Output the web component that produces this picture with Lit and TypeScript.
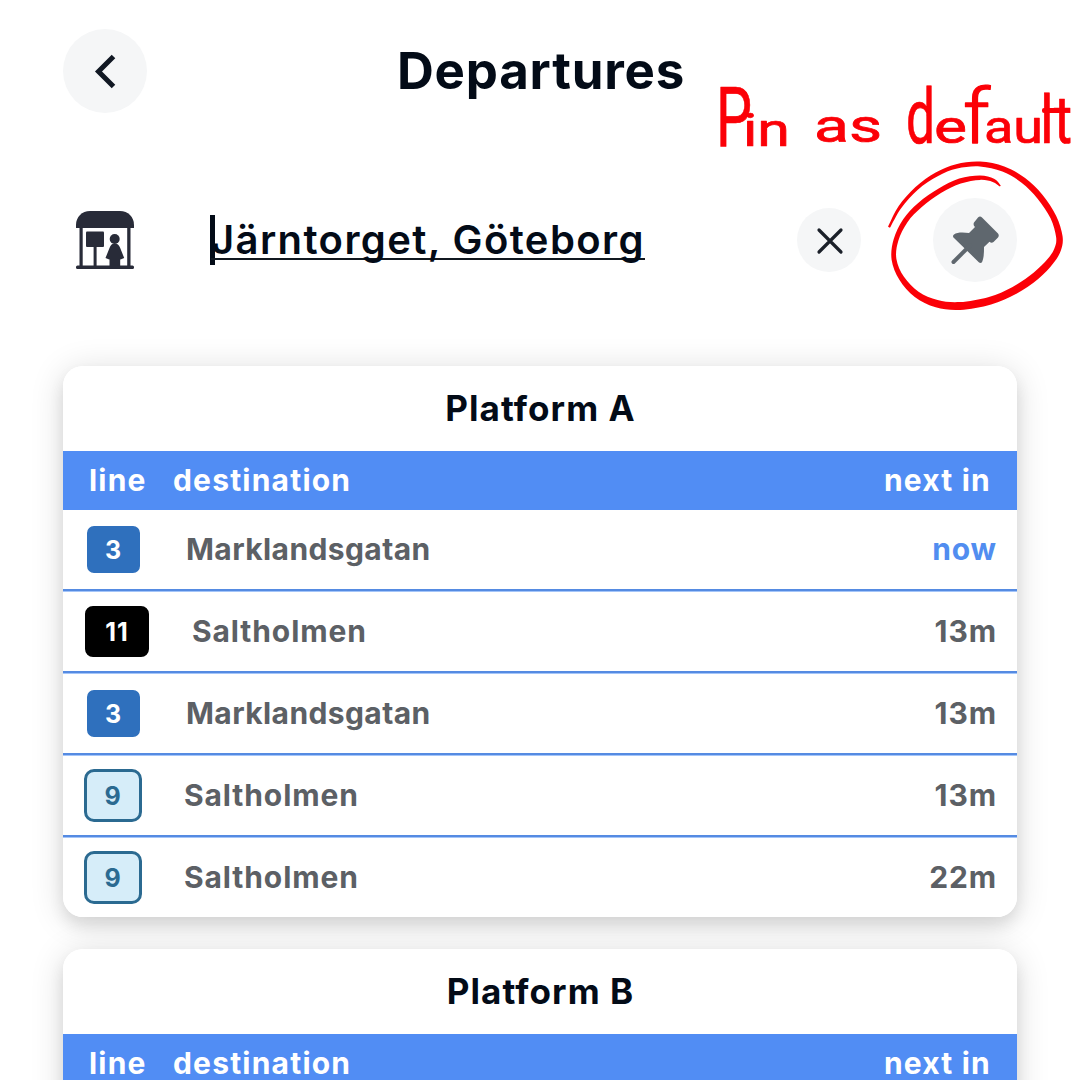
import { LitElement, html, css, svg } from "lit";
import { customElement, property } from "lit/decorators.js";
import { classMap } from "lit/directives/class-map.js";

type Tone = "blue" | "black" | "sky";

interface Departure {
  line: string;
  tone: Tone;
  destination: string;
  next: string;
}

const PLATFORM_A: Departure[] = [
  { line: "3", tone: "blue", destination: "Marklandsgatan", next: "now" },
  { line: "11", tone: "black", destination: "Saltholmen", next: "13m" },
  { line: "3", tone: "blue", destination: "Marklandsgatan", next: "13m" },
  { line: "9", tone: "sky", destination: "Saltholmen", next: "13m" },
  { line: "9", tone: "sky", destination: "Saltholmen", next: "22m" },
];

/* Centre line of the marker stroke: x, y and the stroke's width there. */
const MARKER: [number, number, number][] = [
  [567, 502, 5], [600, 441, 8], [650, 385, 9], [710, 343, 11], [770, 319, 12],
  [840, 312, 13], [910, 327, 15], [970, 361, 16], [1020, 410, 17], [1060, 471, 17],
  [1078, 530, 18], [1073, 568, 19], [1051, 604, 20], [1008, 647, 22], [942, 692, 22],
  [870, 722, 22], [780, 738, 22], [710, 731, 21], [650, 703, 18], [605, 655, 15],
  [582, 598, 13], [588, 540, 13], [616, 482, 14], [660, 435, 15], [720, 392, 14],
  [780, 363, 14], [840, 353, 12], [880, 361, 9], [901, 378, 3],
];

function curve(points: number[][]): string {
  const n = points.length;
  let d = "";
  for (let i = 0; i < n - 1; i++) {
    const p0 = points[Math.max(i - 1, 0)];
    const p1 = points[i];
    const p2 = points[i + 1];
    const p3 = points[Math.min(i + 2, n - 1)];
    const c = [
      p1[0] + (p2[0] - p0[0]) / 6, p1[1] + (p2[1] - p0[1]) / 6,
      p2[0] - (p3[0] - p1[0]) / 6, p2[1] - (p3[1] - p1[1]) / 6,
      p2[0], p2[1],
    ];
    d += "C" + c.map((v) => v.toFixed(1)).join(" ");
  }
  return d;
}

function marker(points: [number, number, number][]): string {
  const edge = (side: number) =>
    points.map(([x, y, w], i) => {
      const a = points[Math.max(i - 1, 0)];
      const b = points[Math.min(i + 1, points.length - 1)];
      const dx = b[0] - a[0];
      const dy = b[1] - a[1];
      const k = (side * (w + 1.5)) / 2 / Math.hypot(dx, dy);
      return [x - dy * k, y + dx * k];
    });
  const left = edge(1);
  const right = edge(-1).reverse();
  return `M${left[0].join(" ")}${curve(left)}L${right[0].join(" ")}${curve(right)}Z`;
}

@customElement("line-badge")
export class LineBadge extends LitElement {
  @property() tone: Tone = "blue";
  @property() line = "";

  static styles = css`
    :host { display: block; }
    .badge {
      box-sizing: border-box;
      display: flex;
      align-items: center;
      justify-content: center;
      width: 58px;
      height: 53px;
      padding-top: 2px;
      border: 3px solid #fff;
      border-radius: 10px;
      font: 700 25px/1 Inter, "Liberation Sans", sans-serif;
      color: #fff;
    }
    .blue { width: 59px; margin-right: -1px; background: #2f70bd; }
    .black { width: 64px; height: 51px; margin: 1px; background: #000; border-color: #000; border-radius: 8px; }
    .sky { background: #d6edf9; border-color: #2b6a91; color: #2b6a91; }
  `;

  render() {
    return html`<div class=${classMap({ badge: true, [this.tone]: true })}>${this.line}</div>`;
  }
}

@customElement("platform-card")
export class PlatformCard extends LitElement {
  @property() heading = "";
  @property({ attribute: false }) departures: Departure[] = [];

  static styles = css`
    :host { display: block; }
    .card {
      overflow: hidden;
      border-radius: 20px;
      background: #fff;
    }
    .shadow {
      border-radius: 20px;
      box-shadow: 0 9px 15px rgba(0, 0, 0, 0.09), 0 4px 34px rgba(0, 0, 0, 0.14);
    }
    .title {
      margin: 0 -1px 0 0;
      height: 85px;
      text-align: center;
      font-size: 35px;
      font-weight: 650;
      line-height: 84px;
      color: #030b17;
      letter-spacing: 1.1px;
    }
    .head {
      box-sizing: border-box;
      display: flex;
      align-items: center;
      height: 59px;
      padding: 0 26px 2px;
      background: #518df4;
      color: #fff;
      font-size: 30px;
      font-weight: 700;
      letter-spacing: 1.2px;
    }
    .line { width: 84px; }
    .dest { flex: 1; }
    .row {
      box-sizing: border-box;
      display: flex;
      align-items: center;
      height: 79px;
      padding: 0 20px 0 21px;
      color: #5c6065;
      font-size: 30px;
      font-weight: 650;
      letter-spacing: 0.9px;
    }
    .row span { padding-bottom: 2px; }
    .rule { height: 3px; background: linear-gradient(#558be2 0 2px, #a4c5f9 2px); }
    .name { flex: 1; margin-left: 42px; }
    .name.blue { margin-left: 44px; letter-spacing: 0.4px; }
    .now { color: #518df0; }
  `;

  render() {
    return html`
      <div class="shadow">
        <section class="card">
          <h2 class="title">${this.heading}</h2>
          <div class="head">
            <span class="line">line</span>
            <span class="dest">destination</span>
            <span>next in</span>
          </div>
          ${this.departures.map(
            (d, i) => html`
              ${i ? html`<div class="rule"></div>` : ""}
              <div class="row">
                <line-badge .tone=${d.tone} .line=${d.line}></line-badge>
                <span class=${classMap({ name: true, [d.tone]: true })}>${d.destination}</span>
                <span class=${classMap({ now: d.next === "now" })}>${d.next}</span>
              </div>
            `
          )}
        </section>
      </div>
    `;
  }
}

@customElement("app-root")
export class AppRoot extends LitElement {
  static styles = css`
    :host {
      display: block;
      position: relative;
      box-sizing: border-box;
      width: 1080px;
      height: 1080px;
      padding: 29px 63px 0;
      overflow: hidden;
      background: #fff;
      color: #030b17;
      font-family: Inter, "Liberation Sans", sans-serif;
    }
    .top {
      display: grid;
      grid-template-columns: 84px 1fr 84px;
      align-items: center;
      height: 84px;
    }
    h1 {
      margin: 0 -2px 0 0;
      text-align: center;
      font-size: 51px;
      font-weight: 650;
      line-height: 84px;
      letter-spacing: 0.8px;
    }
    button {
      display: grid;
      place-items: center;
      width: 84px;
      height: 84px;
      padding: 0;
      border: 0;
      border-radius: 50%;
      background: #f5f6f7;
    }
    .search {
      display: flex;
      align-items: center;
      height: 84px;
      margin-top: 85px;
    }
    .stop { width: 58px; height: 58px; margin-left: 13px; }
    .field {
      flex: 1;
      display: flex;
      align-items: center;
      margin-left: 76px;
      font-size: 40px;
      font-weight: 600;
      letter-spacing: 1.4px;
    }
    .caret { width: 5px; height: 50px; margin-right: -4px; background: #030b17; }
    .value {
      display: flex;
      align-items: center;
      height: 36px;
      margin-top: 1px;
      border-bottom: 2px solid #111820;
    }
    .clear { width: 64px; height: 64px; margin-right: 72px; }
    .cards {
      display: grid;
      gap: 32px;
      margin-top: 84px;
    }
    .note {
      position: absolute;
      inset: 0;
      width: 1080px;
      height: 1080px;
      pointer-events: none;
      fill: #fb0007;
      font-family: Roboto, "Liberation Sans", sans-serif;
    }
    .note text { stroke: #fb0007; stroke-width: 0.7px; stroke-linejoin: round; }
    .tall { font-size: 76px; font-weight: 400; }
    .thin { font-size: 76px; font-weight: 300; stroke-width: 1.3px; }
    .initial { font-size: 84px; font-weight: 400; }
    .end { font-size: 66px; font-weight: 400; }
    .low { font-size: 46px; font-weight: 400; }
  `;

  render() {
    return html`
      <header class="top">
        <button aria-label="Back">
          <svg width="84" height="84" viewBox="0 0 84 84" fill="none" stroke="#111823" stroke-width="5">
            <path d="M50.500 27.500 35.500 42.500l15 15" />
          </svg>
        </button>
        <h1>Departures</h1>
      </header>

      <div class="search">
        <svg class="stop" viewBox="0 0 58 58" fill="#282b38">
          <path d="M0 17v-3C0 6 6 0 14 0h30c8 0 14 6 14 14v3z" />
          <path d="M3.500 16h3.200v40H3.500zM51.200 16h3.300v40h-3.300zM17.600 35h3v21h-3z" />
          <rect x="10" y="20.500" width="18" height="15.500" rx="1" />
          <rect y="54.500" width="58" height="3.500" rx="1.500" />
          <circle cx="38.700" cy="28" r="5" />
          <path d="M38.700 32.500c3 0 4.500 1.800 5.500 4.500l4 10-3.700 1.500-.3-.2V56H33.500v-7.700l-.3.200-3.700-1.500 4-10c1-2.700 2.200-4.500 5.200-4.500z" />
        </svg>
        <div class="field">
          <span class="caret"></span>
          <span class="value">Järntorget, Göteborg</span>
        </div>
        <button class="clear" aria-label="Clear">
          <svg width="64" height="64" viewBox="0 0 64 64" fill="none" stroke="#1b2029" stroke-width="3.200" stroke-linecap="round">
            <path d="M22 22l22 22M44 22l-22 22" />
          </svg>
        </button>
        <button aria-label="Pin">
          <svg width="84" height="84" viewBox="0 0 84 84" fill="#5f676e">
            <path d="M45 19.500Q47 17.500 49 19.500L65 35.500Q66.500 37.500 65 39.500L60.500 44Q58.500 45.700 56.500 43.700L51 49C51 54 51 60 49 64.200Q47.500 65.700 45.800 64.200L21 40Q19 38 21 36.500C24 34 31 34.500 36 35L42 29Q39.800 27 41 24.500z" />
            <path d="M20.500 64 37 47.500" stroke="#5f676e" stroke-width="4" stroke-linecap="round" />
          </svg>
        </button>
      </div>

      <main class="cards">
        <platform-card heading="Platform A" .departures=${PLATFORM_A}></platform-card>
        <platform-card heading="Platform B" .departures=${PLATFORM_A}></platform-card>
      </main>

      <svg class="note" viewBox="0 0 1080 1080">
        ${svg`<path transform="translate(700 60) scale(.33333)" d=${marker(MARKER)} />`}
        <text y="146"><tspan class="initial" x="716" textLength="36" lengthAdjust="spacingAndGlyphs">P</tspan><tspan class="low" x="743" textLength="47" lengthAdjust="spacingAndGlyphs">in</tspan></text>
        <text class="low" x="814" y="142" textLength="68" lengthAdjust="spacingAndGlyphs">as</text>
        <text y="143"><tspan class="tall" x="906" textLength="29" lengthAdjust="spacingAndGlyphs">d</tspan><tspan class="low" x="934" textLength="33" lengthAdjust="spacingAndGlyphs">e</tspan><tspan class="thin" x="963" textLength="27" lengthAdjust="spacingAndGlyphs">f</tspan><tspan class="low" x="984" textLength="59" lengthAdjust="spacingAndGlyphs">au</tspan><tspan class="end" x="1040" textLength="32" lengthAdjust="spacingAndGlyphs">lt</tspan></text>
        <rect x="1042" y="108" width="22" height="5" rx="2" />
      </svg>
    `;
  }
}
